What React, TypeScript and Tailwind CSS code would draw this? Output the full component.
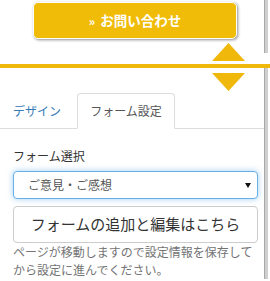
import { useState } from 'react'

const jp = { fontFamily: '"Noto Sans CJK JP", "Noto Sans", sans-serif' }

function Rail({ className = '' }: { className?: string }) {
  return <div className={`w-[4px] bg-[#cfcfcf] border-l border-[#a9a9a9] ${className}`} />
}

function Triangle({ up }: { up?: boolean }) {
  return (
    <svg width="33" height="18" viewBox="0 0 33 18" className="block">
      <polygon points={up ? '16.5,0 33,18 0,18' : '0,0 33,0 16.5,18'} fill="#efb80b" />
    </svg>
  )
}

export default function App() {
  const [tab, setTab] = useState<'design' | 'form'>('form')
  const [form, setForm] = useState('opinion')

  return (
    <div className="w-[270px] h-[281px] overflow-hidden bg-white text-[#333]" style={jp}>
      <div className="flex h-[64px]">
        <div className="w-[264px] pt-[2px]">
          <button className="ml-[33px] w-[204px] h-[37px] rounded-[5px] bg-[#f0bc08] border border-white shadow-[1px_1px_3px_rgba(0,0,0,0.45)] text-white text-[13.5px] font-bold flex items-center justify-center gap-[5px]">
            <span className="text-[12px]">»</span>
            <span>お問い合わせ</span>
          </button>
          <div className="ml-[212px] mt-[4px]">
            <Triangle up />
          </div>
        </div>
        <Rail className="h-[53px]" />
      </div>

      <div className="h-[4px] bg-[#efb80b]" />

      <div className="flex">
        <div className="w-[264px]">
          <div className="ml-[212px] mt-[5px] h-[18px]">
            <Triangle />
          </div>

          <div className="flex border-b border-[#dddddd] mt-[2px] h-[36px]">
            <button
              onClick={() => setTab('design')}
              className={`pl-[13px] pr-[16px] text-[12px] h-[35px] ${tab === 'design' ? 'text-[#555]' : 'text-[#337ab7]'}`}
            >
              デザイン
            </button>
            <button
              onClick={() => setTab('form')}
              className={`w-[98px] h-[36px] text-[12px] rounded-t-[4px] ${tab === 'form' ? 'bg-white border border-[#dddddd] border-b-white text-[#555]' : 'text-[#337ab7]'}`}
            >
              フォーム設定
            </button>
          </div>

          <div className="pl-[13px] pr-[6px]">
            <div className="mt-[18px] text-[12px] leading-[17px] text-[#333]">フォーム選択</div>

            <div className="relative mt-[7px]">
              <select
                value={form}
                onChange={(e) => setForm(e.target.value)}
                className="w-full h-[28px] appearance-none rounded-[4px] border border-[#66afe9] bg-white pl-[14px] text-[12px] text-[#555] outline-none shadow-[0_0_6px_rgba(102,175,233,0.6)]"
              >
                <option value="opinion">ご意見・ご感想</option>
              </select>
              <svg width="6" height="5" viewBox="0 0 6 5" className="pointer-events-none absolute right-[7px] top-[12px]">
                <polygon points="0,0 6,0 3,5" fill="#111" />
              </svg>
            </div>

            <button className="mt-[7px] w-full h-[37px] rounded-[4px] border border-[#cccccc] bg-white text-[15px] text-[#333]">
              フォームの追加と編集はこちら
            </button>

            <p className="text-[12px] leading-[18px] text-[#737373] whitespace-nowrap">
              ページが移動しますので設定情報を保存して
              <br />
              から設定に進んでください。
            </p>
          </div>
        </div>
        <Rail className="self-stretch" />
      </div>
    </div>
  )
}
